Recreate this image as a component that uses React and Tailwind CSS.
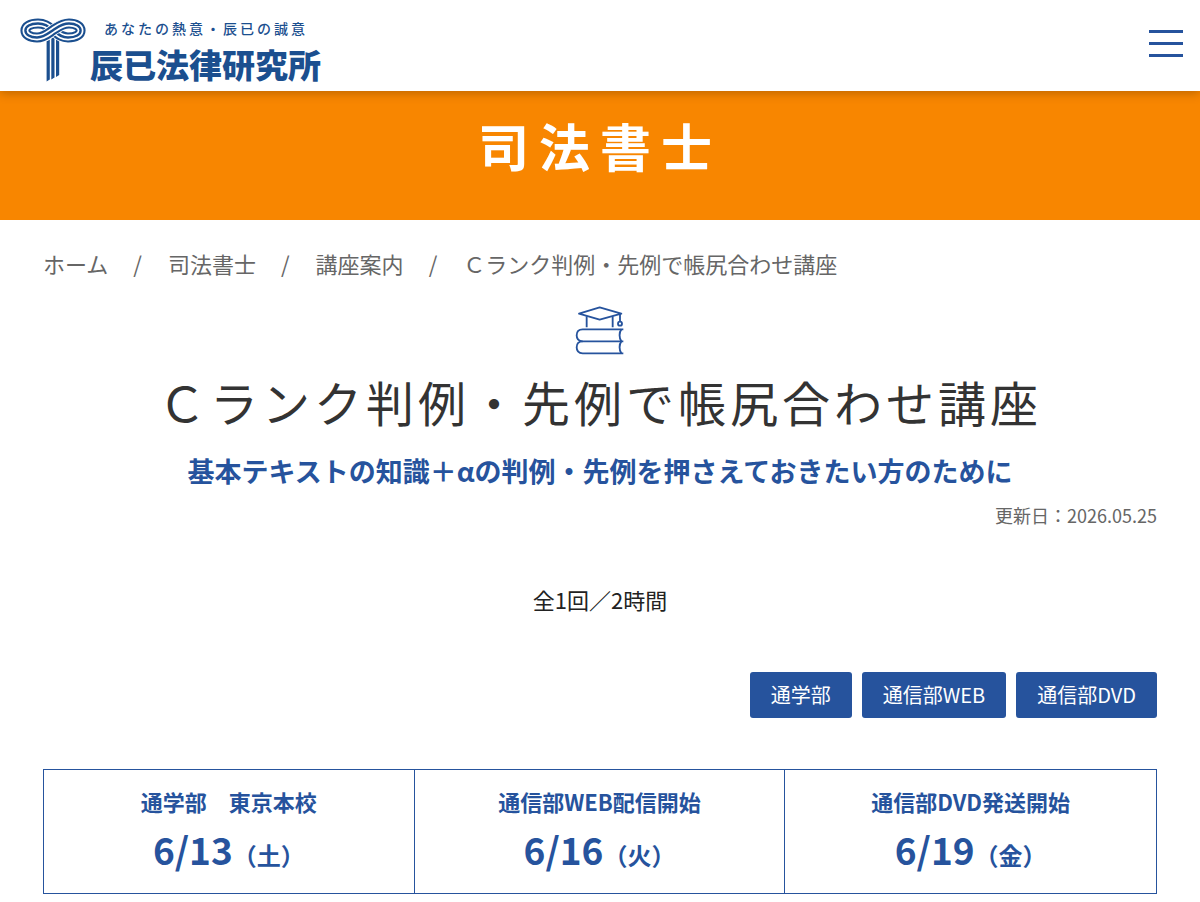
const crumbs = ['ホーム', '司法書士', '講座案内'];

const courses = ['通学部', '通信部WEB', '通信部DVD'];

const schedule = [
  { label: '通学部　東京本校', date: '6/13', day: '（土）' },
  { label: '通信部WEB配信開始', date: '6/16', day: '（火）' },
  { label: '通信部DVD発送開始', date: '6/19', day: '（金）' },
];

// Three parallel lines following one path
function Ribbon({ d }) {
  return (
    <g fill="none">
      <path d={d} stroke="#fff" strokeWidth="11.6" />
      <path d={d} stroke="#1b4f8f" strokeWidth="10" />
      <path d={d} stroke="#fff" strokeWidth="5.8" />
      <path d={d} stroke="#1b4f8f" strokeWidth="2.4" />
    </g>
  );
}

function LogoMark() {
  return (
    <svg className="h-16 w-[66px] shrink-0" viewBox="0 0 66 64" aria-hidden="true">
      <g fill="#1b4f8f">
        <path d="M26.6 18h3.2v43.5l-3.2 2z" />
        <path d="M31.3 18h3.2v41.5l-3.2 2z" />
        <path d="M36 18h3.2v39l-3.2 2z" />
      </g>
      <Ribbon d="M33 12.2C28 8.300 25 5.500 18 5.500C10 5.500 5.400 8.500 5.400 12.500C5.400 16.500 10 19.500 17 19.500C24 19.500 28 16 33 12.200M33 12.200C38 16 41 19.500 48 19.500C56 19.500 60.600 16.500 60.600 12.500C60.600 8.500 56 5.500 49 5.500C42 5.500 38 8.300 33 12.200" />
      <Ribbon d="M17 19.500C24 19.500 28 15.500 33 12.200C38 9 42 5.500 49 5.500" />
    </svg>
  );
}

function BooksIcon() {
  return (
    <svg
      className="size-[50px]"
      viewBox="45 30 150 150"
      fill="none"
      stroke="#26539d"
      strokeWidth="5.5"
      strokeLinejoin="round"
      aria-hidden="true"
    >
      <path d="M57 56L119 37L184 56L119 74Z" />
      <path d="M80 64V97M158 64V97M180 57V79" />
      <circle cx="180" cy="86" r="6" />
      <path d="M190 103H68C56 103 50 111 50 121S56 139 68 139H190" />
      <path d="M68 139C56 139 50 147 50 157S56 175 68 175H190" />
      <path d="M184 103C177 112 177 130 184 139C177 148 177 166 184 175" />
    </svg>
  );
}

function Header() {
  return (
    <header className="relative z-10 flex h-[91px] items-center justify-between bg-white pr-[17px] pb-1 pl-5 shadow-[0_2px_10px_rgba(0,0,0,0.25)]">
      <a href="#" className="flex items-start gap-1 pt-5 text-[#1b4f8f]">
        <LogoMark />
        <span className="flex flex-col">
          <span className="pl-3.5 text-[14px] leading-5 font-medium tracking-[3px]">
            あなたの熱意・辰已の誠意
          </span>
          <span className="text-[33px] leading-[52px] font-black">辰已法律研究所</span>
        </span>
      </a>
      <button type="button" aria-label="メニュー" className="flex w-[34px] flex-col gap-[9px]">
        <span className="h-[3px] bg-[#26539d]" />
        <span className="h-[3px] bg-[#26539d]" />
        <span className="h-[3px] bg-[#26539d]" />
      </button>
    </header>
  );
}

export default function App() {
  return (
    <div className="bg-white font-['Noto_Sans_CJK_JP','Noto_Sans',sans-serif] text-[#222]">
      <Header />

      <div className="bg-[#f88600] pt-[18px] pb-[39px] text-center text-[51px] leading-[72px] font-bold tracking-[10px] text-white">
        司法書士
      </div>

      <main className="px-[43px] pt-[27px] pb-2">
        <nav aria-label="パンくずリスト">
          <ol className="flex flex-wrap text-[22px] leading-8 text-[#666]">
            {crumbs.map((name) => (
              <li key={name}>
                <a href="#">{name}</a>
                <span className="pr-[26px] pl-[25px]">/</span>
              </li>
            ))}
            <li>Ｃランク判例・先例で帳尻合わせ講座</li>
          </ol>
        </nav>

        <div className="mt-[26px] flex justify-center">
          <BooksIcon />
        </div>
        <h1 className="mt-3.5 text-center text-[48px] leading-[64px] tracking-[4px] text-[#333]">
          Ｃランク判例・先例で帳尻合わせ講座
        </h1>
        <p className="mt-[18px] text-center text-[27px] leading-10 font-bold text-[#26539d]">
          基本テキストの知識＋αの判例・先例を押さえておきたい方のために
        </p>
        <p className="mt-3 text-right text-[18px] leading-6 text-[#666]">更新日：2026.05.25</p>

        <p className="mt-14 text-center text-[22px] leading-8">全1回／2時間</p>

        <div className="mt-[57px] flex flex-wrap justify-end gap-2.5">
          {courses.map((course) => (
            <a
              key={course}
              href="#"
              className="rounded-[3px] bg-[#26539d] px-[21px] py-2 text-[20px] leading-[30px] text-white"
            >
              {course}
            </a>
          ))}
        </div>

        <ul className="mt-[51px] grid grid-cols-3 divide-x divide-[#26539d] border border-[#26539d] text-center font-bold text-[#26539d]">
          {schedule.map((item) => (
            <li key={item.date} className="py-[15px]">
              <p className="text-[22px] leading-8">{item.label}</p>
              <p className="mt-[3px] text-[37px] leading-[58px]">
                {item.date}
                <span className="text-[24px] leading-none">{item.day}</span>
              </p>
            </li>
          ))}
        </ul>
      </main>
    </div>
  );
}
